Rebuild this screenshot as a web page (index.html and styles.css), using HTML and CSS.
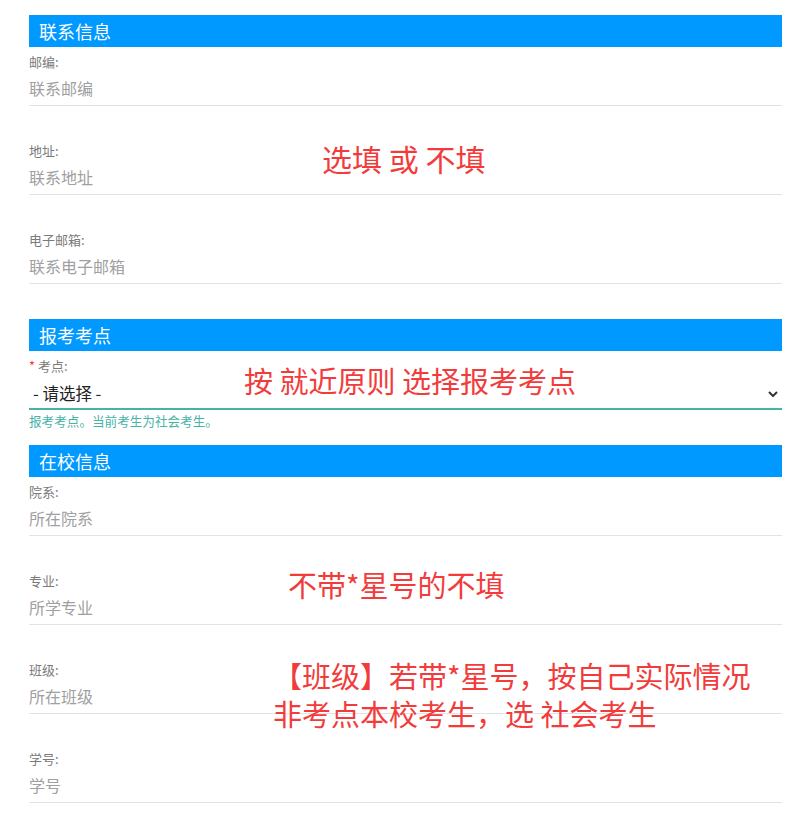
FILE: index.html
```html
<!DOCTYPE html>
<html lang="zh-CN">
  <head>
    <meta charset="UTF-8" />
    <meta name="viewport" content="width=device-width, initial-scale=1.0" />
    <title>报名信息</title>
    <link rel="stylesheet" href="styles.css">
  </head>

  <body>
    <div id="page">
      <div class="section">
        <h3 class="section-title">联系信息</h3>
        <div class="field">
          <label class="field-label">邮编:</label>
          <input type="text" class="field-input" placeholder="联系邮编" />
        </div>
        <div class="field">
          <label class="field-label">地址:</label>
          <input type="text" class="field-input" placeholder="联系地址" />
        </div>
        <div class="field">
          <label class="field-label">电子邮箱:</label>
          <input type="text" class="field-input" placeholder="联系电子邮箱" />
        </div>
      </div>

      <div class="section">
        <h3 class="section-title">报考考点</h3>
        <div class="field field-help">
          <label class="field-label"><span class="required">*</span> 考点:</label>
          <div class="select-wrap">
            <select class="field-select">
              <option>- 请选择 -</option>
            </select>
            <svg class="select-arrow" width="10" height="6" viewBox="0 0 10 6">
              <path d="M1 1 L5 5 L9 1" fill="none" stroke="#333" stroke-width="2" />
            </svg>
          </div>
          <div class="help-text">报考考点。当前考生为社会考生。</div>
        </div>
      </div>

      <div class="section">
        <h3 class="section-title">在校信息</h3>
        <div class="field">
          <label class="field-label">院系:</label>
          <input type="text" class="field-input" placeholder="所在院系" />
        </div>
        <div class="field">
          <label class="field-label">专业:</label>
          <input type="text" class="field-input" placeholder="所学专业" />
        </div>
        <div class="field">
          <label class="field-label">班级:</label>
          <input type="text" class="field-input" placeholder="所在班级" />
        </div>
        <div class="field">
          <label class="field-label">学号:</label>
          <input type="text" class="field-input" placeholder="学号" />
        </div>
      </div>

      <!-- notes pasted over the form -->
      <div class="note note-wide" style="left: 322px; top: 139px">选填 或 不填</div>
      <div class="note" style="left: 244px; top: 361px">按 就近原则 选择报考考点</div>
      <div class="note" style="left: 288px; top: 565px">不带*星号的不填</div>
      <div class="note" style="left: 273px; top: 656px">【班级】若带*星号，按自己实际情况<br />非考点本校考生，选 社会考生</div>
    </div>
  </body>
</html>
```

FILE: styles.css
```css
body {
  margin: 0;
  font-family: "Noto Sans CJK SC", "Noto Sans", sans-serif;
  background: #fff;
}

#page {
  position: relative;
  padding: 15px 25px 0 29px;
}

.section {
  display: flex;
  flex-direction: column;
  padding-bottom: 5px;
}

.section-title {
  margin: 0;
  height: 32px;
  line-height: 32px;
  padding-left: 10px;
  background-color: #0099ff;
  color: white;
  font-size: 18px;
  font-weight: normal;
}

.field {
  padding-top: 5px;
  margin-bottom: 30px;
}

.field-help {
  margin-bottom: 10px;
}

.field-label {
  display: block;
  height: 19px;
  line-height: 19px;
  font-size: 13px;
  color: #7a7a7a;
}

.required {
  color: #f33;
}

.field-input {
  display: block;
  box-sizing: border-box;
  width: 100%;
  height: 35px;
  padding: 0;
  border: none;
  border-bottom: 1px solid #e3e3e3;
  font-family: inherit;
  font-size: 16px;
  color: #333;
  outline: none;
}

.field-input::placeholder {
  color: #a0a0a0;
}

.select-wrap {
  position: relative;
}

.field-select {
  display: block;
  box-sizing: border-box;
  width: 100%;
  height: 35px;
  padding: 3px 4px 0;
  border: none;
  border-bottom: 2px solid #45b3a6;
  border-radius: 0;
  background: #fff;
  appearance: none;
  font-family: inherit;
  font-size: 16.5px;
  color: #222;
  outline: none;
}

.select-arrow {
  position: absolute;
  right: 4px;
  top: 16px;
}

.help-text {
  margin-top: 2px;
  line-height: 18px;
  font-size: 12.6px;
  color: #45b3a6;
}

.note {
  position: absolute;
  line-height: 38px;
  font-size: 29px;
  color: #f23c3c;
  white-space: nowrap;
}

.note-wide {
  font-size: 30px;
}
```
